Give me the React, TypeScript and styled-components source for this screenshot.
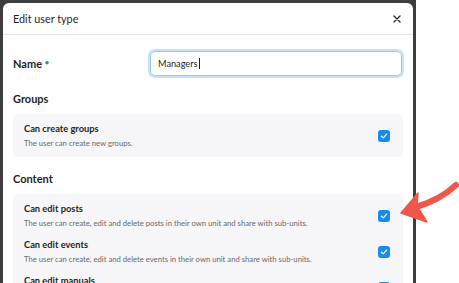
import styled, { createGlobalStyle } from 'styled-components';

const GlobalStyle = createGlobalStyle`
  html, body {
    margin: 0;
    padding: 0;
    background: #ffffff;
  }
  body {
    font-family: 'Lato', 'Liberation Sans', sans-serif;
    -webkit-font-smoothing: antialiased;
  }
`;

const Page = styled.div`
  position: relative;
  width: 459px;
  height: 283px;
  overflow: hidden;
  display: flex;
  background: #ffffff;
`;

const Backdrop = styled.div`
  width: 416px;
  height: 100%;
  box-sizing: border-box;
  padding: 3px 3px 0 3px;
  background: #3e3e3e;
  display: flex;
`;

const Modal = styled.div`
  flex: 1;
  background: #ffffff;
  border-radius: 6px 6px 0 0;
  display: flex;
  flex-direction: column;
  overflow: hidden;
`;

const Header = styled.div`
  height: 31px;
  flex-shrink: 0;
  display: flex;
  align-items: center;
  justify-content: space-between;
  padding: 0 11px 0 10px;
  border-bottom: 1px solid #e6e6e6;
`;

const Title = styled.h1`
  margin: 0;
  font-size: 10.8px;
  font-weight: 400;
  color: #1f1f1f;
`;

const CloseButton = styled.button`
  border: 0;
  background: none;
  padding: 0;
  width: 10px;
  height: 10px;
  display: flex;
  align-items: center;
  justify-content: center;
  color: #2a2a2a;
`;

const Body = styled.div`
  padding: 15px 10px 0 10px;
  display: flex;
  flex-direction: column;
`;

const NameRow = styled.div`
  display: flex;
  align-items: center;
  margin-bottom: 1px;
`;

const Label = styled.label`
  width: 137px;
  font-size: 11px;
  font-weight: 700;
  color: #1f1f1f;
`;

const Required = styled.sup`
  color: #1a8cf0;
  font-size: 8px;
  margin-left: 2.5px;
  vertical-align: 3px;
`;

const InputBox = styled.div`
  flex: 1;
  height: 25px;
  box-sizing: border-box;
  display: flex;
  align-items: center;
  padding: 0 7px;
  border: 1px solid #9fc7e6;
  border-radius: 5px;
  box-shadow: 0 0 0 2px #c4e3fb;
  font-size: 9.2px;
  color: #1f1f1f;
  margin: 1px 1px 0 0;
`;

const Caret = styled.span`
  display: inline-block;
  width: 1px;
  height: 11px;
  background: #1f1f1f;
  margin-left: 1px;
`;

const SectionTitle = styled.h2`
  margin: 14px 0 7px 0;
  font-size: 11px;
  line-height: 16px;
  font-weight: 700;
  color: #1f1f1f;
`;

const Card = styled.div`
  background: #f6f6f8;
  border-radius: 6px;
  padding: 8px 13px 8px 11px;
  display: flex;
  flex-direction: column;
  gap: 9px;
`;

const Option = styled.div`
  display: flex;
  align-items: center;
  justify-content: space-between;
`;

const OptionText = styled.div`
  display: flex;
  flex-direction: column;
  gap: 1px;
`;

const OptionTitle = styled.div`
  font-size: 9.3px;
  line-height: 14px;
  font-weight: 700;
  color: #1f1f1f;
`;

const OptionDesc = styled.div`
  font-size: 7.7px;
  line-height: 12px;
  color: #6a6a6a;
`;

const Check = styled.span`
  width: 12px;
  height: 12px;
  border-radius: 3px;
  background: #1a8cf0;
  display: flex;
  align-items: center;
  justify-content: center;
  flex-shrink: 0;
`;

const Arrow = styled.svg`
  position: absolute;
  left: 0;
  top: 0;
  pointer-events: none;
`;

const options = {
  groups: [
    { title: 'Can create groups', desc: 'The user can create new groups.' },
  ],
  content: [
    {
      title: 'Can edit posts',
      desc: 'The user can create, edit and delete posts in their own unit and share with sub-units.',
    },
    {
      title: 'Can edit events',
      desc: 'The user can create, edit and delete events in their own unit and share with sub-units.',
    },
    {
      title: 'Can edit manuals',
      desc: 'The user can create, edit and delete manuals in their own unit and share with sub-units.',
    },
  ],
};

const Checkbox = () => (
  <Check>
    <svg width="8" height="8" viewBox="0 0 8 8">
      <path d="M1.4 4.2 L3.2 5.9 L6.6 2.2" fill="none" stroke="#fff" strokeWidth="1.2" strokeLinecap="round" strokeLinejoin="round" />
    </svg>
  </Check>
);

const OptionList = ({ items }: { items: { title: string; desc: string }[] }) => (
  <Card>
    {items.map((o) => (
      <Option key={o.title}>
        <OptionText>
          <OptionTitle>{o.title}</OptionTitle>
          <OptionDesc>{o.desc}</OptionDesc>
        </OptionText>
        <Checkbox />
      </Option>
    ))}
  </Card>
);

const App = () => {
  return (
    <>
      <GlobalStyle />
      <Page>
        <Backdrop>
          <Modal>
            <Header>
              <Title>Edit user type</Title>
              <CloseButton aria-label="Close">
                <svg width="8" height="8" viewBox="0 0 8 8">
                  <path d="M1 1 L7 7 M7 1 L1 7" stroke="currentColor" strokeWidth="1.4" strokeLinecap="round" />
                </svg>
              </CloseButton>
            </Header>
            <Body>
              <NameRow>
                <Label>
                  Name<Required>•</Required>
                </Label>
                <InputBox>
                  Managers
                  <Caret />
                </InputBox>
              </NameRow>
              <SectionTitle>Groups</SectionTitle>
              <OptionList items={options.groups} />
              <SectionTitle>Content</SectionTitle>
              <OptionList items={options.content} />
            </Body>
          </Modal>
        </Backdrop>
        <Arrow width="459" height="283" viewBox="0 0 459 283">
          <path d="M456 185 Q440 200 416 207" fill="none" stroke="#f0574a" strokeWidth="6" strokeLinecap="round" />
          <polygon points="401,213 418,193 417,206 427,222" fill="#f0574a" strokeLinejoin="round" stroke="#f0574a" strokeWidth="1.5" />
        </Arrow>
      </Page>
    </>
  );
};

export default App;
